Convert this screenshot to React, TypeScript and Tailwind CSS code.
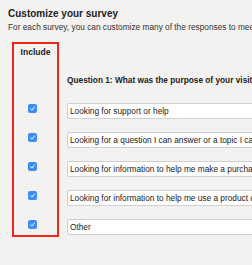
const answers = [
  "Looking for support or help",
  "Looking for a question I can answer or a topic I can contribute to",
  "Looking for information to help me make a purchase decision",
  "Looking for information to help me use a product effectively",
  "Other",
];

function Check() {
  return (
    <span className="mr-[6px] flex h-[9px] w-[9px] items-center justify-center rounded-[2px] bg-[#3a8ef5]">
      <svg viewBox="0 0 10 10" className="h-[7px] w-[7px]" aria-hidden>
        <path d="M2.2 5.3 L4.2 7.3 L7.9 2.8" fill="none" stroke="#fff" strokeWidth="1.4" strokeLinecap="round" strokeLinejoin="round" />
      </svg>
    </span>
  );
}

export default function App() {
  return (
    <main className="h-[265px] w-[252px] overflow-hidden bg-[#f3f2f0] px-2 pt-[7px] font-['Liberation_Sans',Arial,sans-serif] text-[#222]">
      <h1 className="text-[10px] leading-[14px] font-bold">Customize your survey</h1>
      <p className="mt-[1px] text-[8.3px] leading-[11px] whitespace-nowrap text-[#333]">
        For each survey, you can customize many of the responses to meet your needs.
      </p>

      <div className="mt-[9px] ml-1 flex items-start gap-2">
        {/* Include column, outlined in red */}
        <div className="flex w-[47px] shrink-0 flex-col items-center border-2 border-[#f0241c] pb-[6px]">
          <span className="pt-[2px] text-[8.5px] leading-[12px] font-bold">Include</span>
          <div className="mt-[46px] flex flex-col gap-5">
            {answers.map((a) => (
              <Check key={a} />
            ))}
          </div>
        </div>

        <div className="w-[260px] shrink-0">
          <p className="mt-[32px] mb-[10px] text-[8.3px] leading-[12px] font-bold whitespace-nowrap">
            Question 1: What was the purpose of your visit today?
          </p>
          {answers.map((a) => (
            <div key={a} className="flex h-[29px] items-center">
              <div className="h-4 w-full overflow-hidden rounded-[2px] border border-[#cfcfcf] bg-white pl-[2px] text-[8.3px] leading-[14px] whitespace-nowrap text-[#222]">
                {a}
              </div>
            </div>
          ))}
        </div>
      </div>
    </main>
  );
}
